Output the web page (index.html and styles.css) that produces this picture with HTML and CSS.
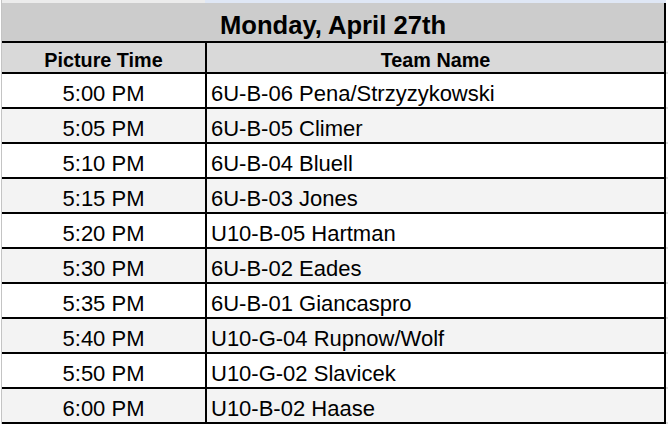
FILE: index.html
```html
<!DOCTYPE html>
<html>
<head>
<meta charset="utf-8">
<link rel="stylesheet" href="styles.css">
</head>
<body>
<div class="sheet">
  <div class="strip"><div class="s1"></div><div class="s2"></div><div class="gut"></div></div>
  <div class="row title"><div class="cell span">Monday, April 27th</div><div class="gut"></div></div>
  <div class="row head"><div class="cell c1">Picture Time</div><div class="cell c2 center">Team Name</div><div class="gut"></div></div>
  <div class="row body"><div class="cell c1">5:00 PM</div><div class="cell c2">6U-B-06 Pena/Strzyzykowski</div><div class="gut"></div></div>
  <div class="row body alt"><div class="cell c1">5:05 PM</div><div class="cell c2">6U-B-05 Climer</div><div class="gut"></div></div>
  <div class="row body"><div class="cell c1">5:10 PM</div><div class="cell c2">6U-B-04 Bluell</div><div class="gut"></div></div>
  <div class="row body alt"><div class="cell c1">5:15 PM</div><div class="cell c2">6U-B-03 Jones</div><div class="gut"></div></div>
  <div class="row body"><div class="cell c1">5:20 PM</div><div class="cell c2">U10-B-05 Hartman</div><div class="gut"></div></div>
  <div class="row body alt"><div class="cell c1">5:30 PM</div><div class="cell c2">6U-B-02 Eades</div><div class="gut"></div></div>
  <div class="row body"><div class="cell c1">5:35 PM</div><div class="cell c2">6U-B-01 Giancaspro</div><div class="gut"></div></div>
  <div class="row body alt"><div class="cell c1">5:40 PM</div><div class="cell c2">U10-G-04 Rupnow/Wolf</div><div class="gut"></div></div>
  <div class="row body"><div class="cell c1">5:50 PM</div><div class="cell c2">U10-G-02 Slavicek</div><div class="gut"></div></div>
  <div class="row body alt"><div class="cell c1">6:00 PM</div><div class="cell c2">U10-B-02 Haase</div><div class="gut"></div></div>
</div>
</body>
</html>
```
FILE: styles.css
```css
html, body {
  margin: 0;
  padding: 0;
  background: #ffffff;
}

.sheet {
  width: 668px;
  height: 426px;
  overflow: hidden;
  font-family: "Liberation Sans", Arial, sans-serif;
  color: #000000;
  background: #ffffff;
}

.strip {
  display: flex;
  height: 3px;
  margin-left: 1px;
  border-left: 1px solid #c4c4c4;
}

.strip .s1 {
  width: 203px;
  background: #ececec;
}

.strip .s2 {
  width: 461px;
  background: #dfe7f5;
}

.row {
  display: flex;
  margin-left: 1px;
  border-left: 1px solid #c4c4c4;
}

.cell {
  box-sizing: border-box;
  border-bottom: 2px solid #000000;
  white-space: nowrap;
  overflow: hidden;
}

.gut {
  flex: 1;
  border-bottom: 2px solid #dadada;
  background: #ffffff;
}

.strip .gut {
  border-bottom: none;
}

.span {
  width: 664px;
  border-right: 2px solid #000000;
  text-align: center;
}

.c1 {
  width: 205px;
  border-right: 2px solid #000000;
  text-align: center;
}

.c2 {
  width: 459px;
  border-right: 2px solid #000000;
  padding-left: 4px;
}

.c2.center {
  text-align: center;
  padding-left: 0;
}

.title .cell {
  height: 40px;
  padding-top: 7px;
  font-size: 25.6px;
  line-height: 30px;
  font-weight: bold;
  background: #cccccc;
}

.head .cell {
  height: 31px;
  padding-top: 6px;
  font-size: 19.8px;
  line-height: 23px;
  font-weight: bold;
  background: #d9d9d9;
}

.body .cell {
  height: 35px;
  padding-top: 7px;
  font-size: 22px;
  line-height: 26px;
  background: #ffffff;
}

.body.alt .cell {
  background: #f3f3f3;
}
```
